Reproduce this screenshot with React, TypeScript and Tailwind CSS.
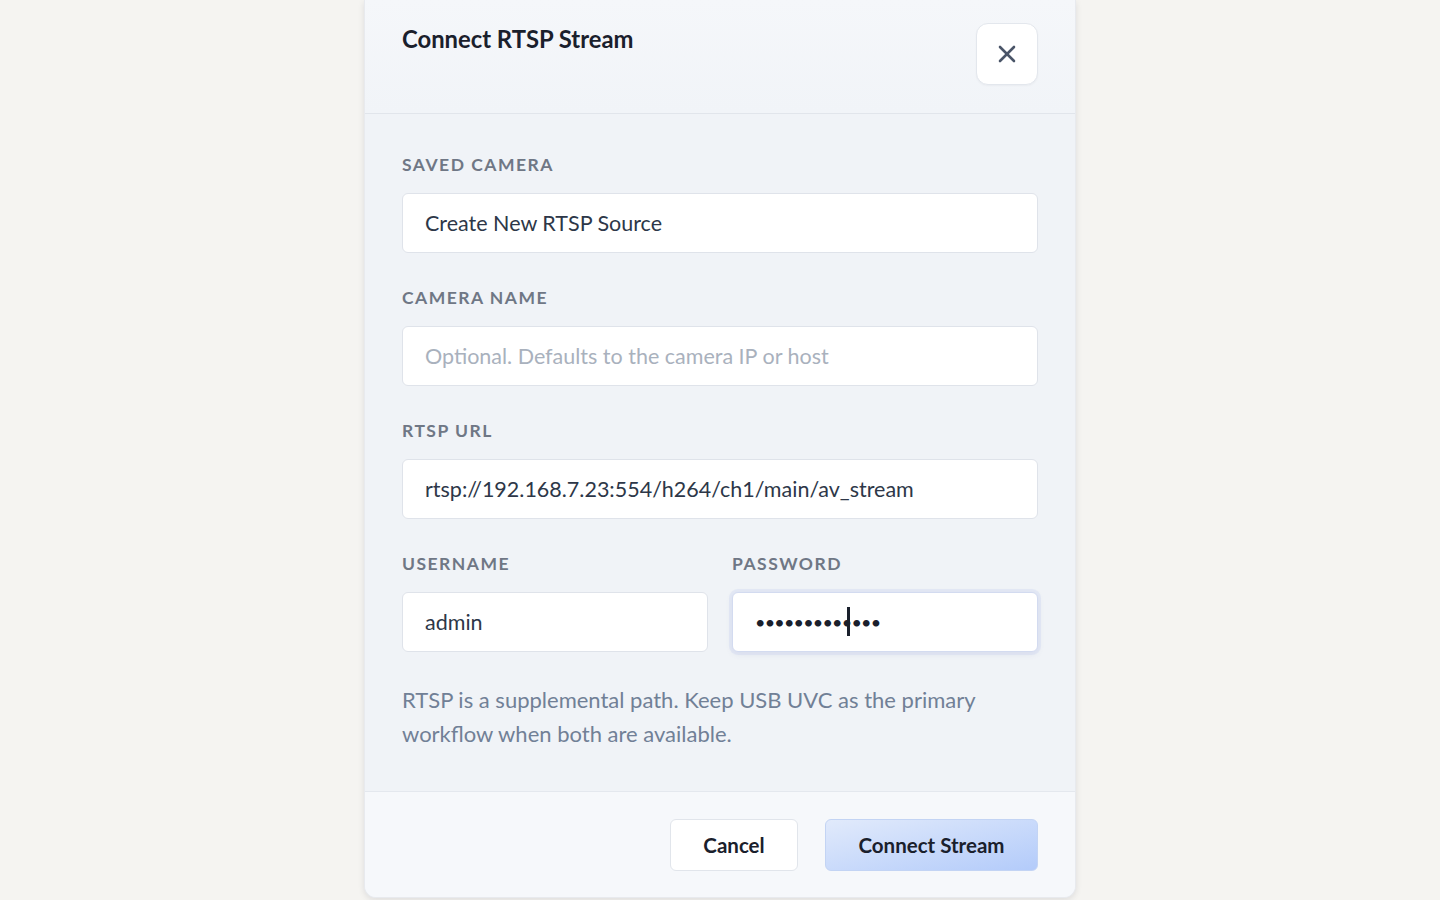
import React from "react";

const font = { fontFamily: "Lato, 'Noto Sans', sans-serif" };

function Label({ children }: { children: React.ReactNode }) {
  return (
    <div className="h-6 text-[17.5px] leading-6 font-bold tracking-[0.085em] text-[#6f7785]">
      {children}
    </div>
  );
}

const inputCls =
  "w-full h-[60px] rounded-md border border-[#dfe3ea] bg-white px-[22px] text-[21.5px] text-[#2d3748] outline-none placeholder:text-[#a9b1bd]";

export default function App() {
  return (
    <div className="min-h-screen w-full bg-[#f5f4f1] flex justify-center" style={font}>
      <div className="w-[712px] h-[898px] flex flex-col bg-[#f0f3f7] rounded-b-xl border-x border-b border-[#e8eaee] shadow-[0_2px_6px_rgba(15,23,42,0.10)] overflow-hidden">
        {/* Header */}
        <div className="flex items-start justify-between px-[37px] pt-[23px] pb-[28px] border-b border-[#e1e5eb] bg-gradient-to-b from-[#f5f7fa] to-[#f1f4f8]">
          <h2 className="mt-[2px] text-[23.8px] leading-7 font-bold text-[#1a202c]">Connect RTSP Stream</h2>
          <button className="w-[62px] h-[62px] rounded-xl bg-white border border-[#e3e7ed] flex items-center justify-center shadow-[0_1px_2px_rgba(15,23,42,0.04)]">
            <svg width="20" height="20" viewBox="0 0 20 20" fill="none" stroke="#4a5568" strokeWidth={2.6} strokeLinecap="round">
              <line x1="3" y1="3" x2="17" y2="17" />
              <line x1="17" y1="3" x2="3" y2="17" />
            </svg>
          </button>
        </div>

        {/* Body */}
        <div className="flex-1 flex flex-col gap-[33px] px-[37px] pt-[39px] pb-[40px]">
          <div className="flex flex-col gap-4">
            <Label>SAVED CAMERA</Label>
            <input className={inputCls} readOnly value="Create New RTSP Source" />
          </div>
          <div className="flex flex-col gap-4">
            <Label>CAMERA NAME</Label>
            <input className={inputCls} readOnly placeholder="Optional. Defaults to the camera IP or host" />
          </div>
          <div className="flex flex-col gap-4">
            <Label>RTSP URL</Label>
            <input className={inputCls} readOnly value="rtsp://192.168.7.23:554/h264/ch1/main/av_stream" />
          </div>
          <div className="grid grid-cols-2 gap-6">
            <div className="flex flex-col gap-4">
              <Label>USERNAME</Label>
              <input className={inputCls} readOnly value="admin" />
            </div>
            <div className="flex flex-col gap-4">
              <Label>PASSWORD</Label>
              <div className="relative">
                <div className="w-full h-[60px] rounded-md border border-[#d3dbf0] bg-white px-[22px] flex items-center shadow-[0_0_0_3px_rgba(203,213,240,0.35),0_2px_6px_rgba(100,116,160,0.12)]">
                  <span className="text-[18px] tracking-[-0.8px] text-[#1a202c]">•••••••••••••</span>
                </div>
                <span className="absolute left-[115px] top-[15px] w-[3px] h-[29px] bg-[#1a202c]" />
              </div>
            </div>
          </div>
          <p className="-mt-[2px] text-[22px] leading-[34px] text-[#718096]">
            RTSP is a supplemental path. Keep USB UVC as the primary workflow when both are available.
          </p>
        </div>

        {/* Footer */}
        <div className="flex justify-end gap-[27px] px-[37px] pt-[27px] pb-[26px] border-t border-[#e4e8ee] bg-[#f6f8fb]">
          <button className="w-[128px] h-[52px] rounded-md bg-white border border-[#e1e5eb] text-[20.5px] font-bold text-[#1a202c]">
            Cancel
          </button>
          <button className="w-[213px] h-[52px] rounded-md bg-gradient-to-br from-[#e1eafb] to-[#b3cbfa] border border-[#c3d4f4] text-[20.5px] font-bold text-[#1a202c]">
            Connect Stream
          </button>
        </div>
      </div>
    </div>
  );
}
